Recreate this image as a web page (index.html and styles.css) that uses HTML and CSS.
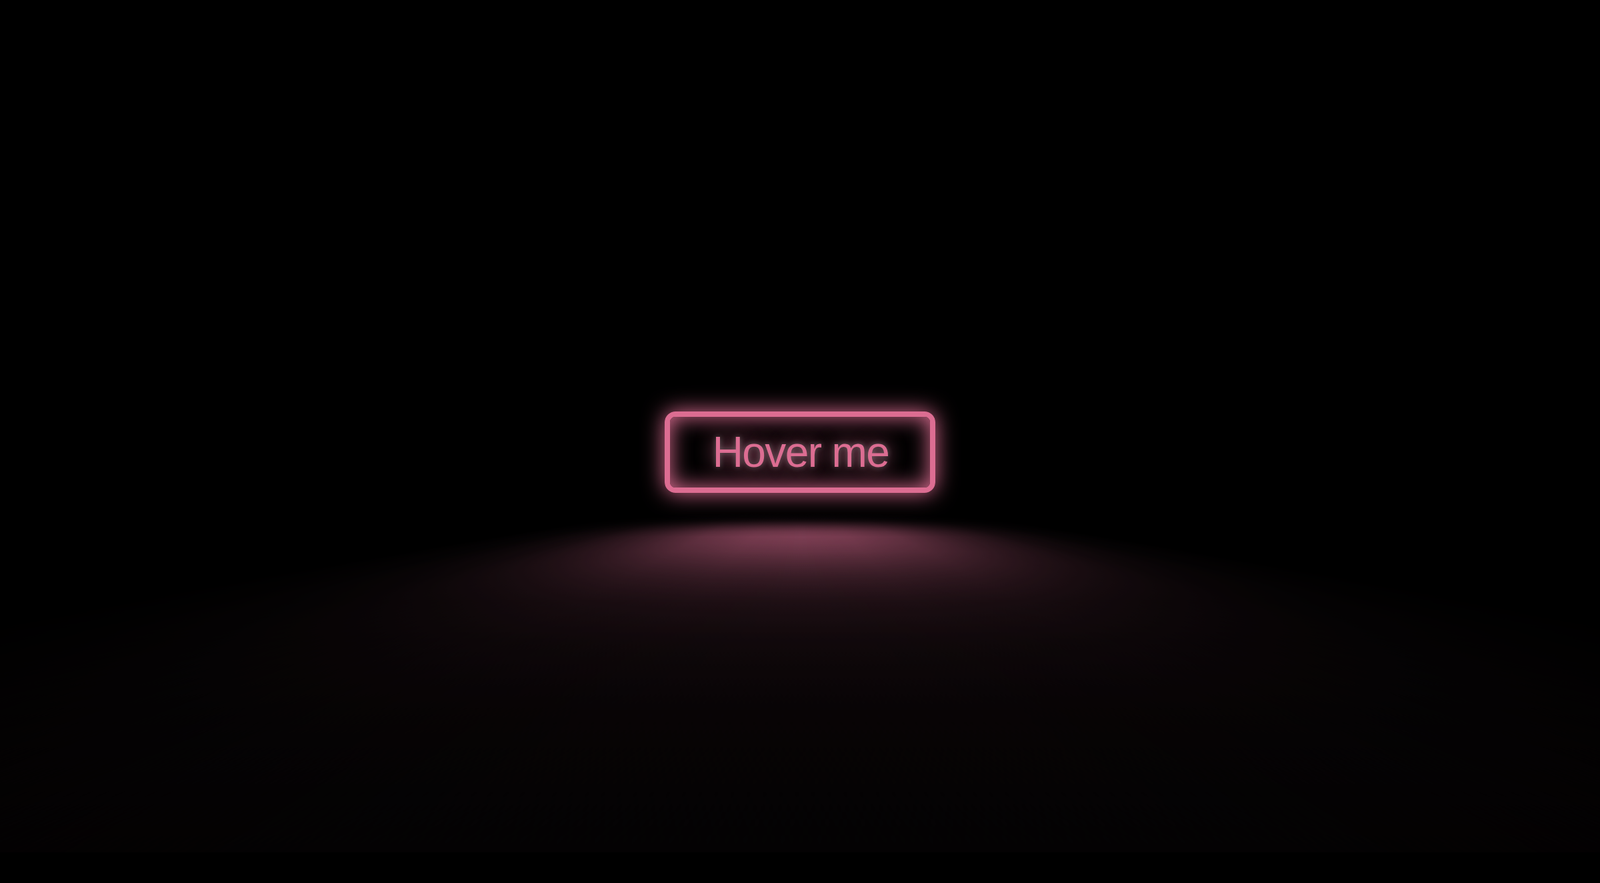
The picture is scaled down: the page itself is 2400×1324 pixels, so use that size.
FILE: index.html
```html
<!DOCTYPE html>
<html lang="en">
<head>
<meta charset="utf-8">
<title>Neon button</title>
<link rel="stylesheet" href="styles.css">
</head>
<body>
<main class="stage">
  <a href="#" class="neon-button">Hover me</a>
</main>
</body>
</html>
```
FILE: styles.css
```css
html, body {
  margin: 0;
  padding: 0;
  background: #000;
  overflow: hidden;
}
.stage {
  --clr-neon: #dc6d92;
  height: 100vh;
  overflow: hidden;
  box-sizing: border-box;
  padding-top: 31px;
  display: grid;
  place-items: center;
  font-family: "Liberation Sans", Arial, sans-serif;
}
.neon-button {
  font-size: 64px;
  letter-spacing: -1.6px;
  display: inline-block;
  cursor: pointer;
  text-decoration: none;
  color: var(--clr-neon);
  border: 8px solid var(--clr-neon);
  padding: 16px 62px 16px 64px;
  border-radius: 16px;
  position: relative;
  text-shadow: 0 0 0.125em rgba(255,255,255,0.3), 0 0 0.45em currentColor;
  box-shadow: inset 0 0 0.5em 0 var(--clr-neon), 0 0 0.5em 0 var(--clr-neon);
}
.neon-button::before {
  pointer-events: none;
  content: "";
  position: absolute;
  top: calc(120% - 192px);
  left: -260px;
  width: calc(100% + 520px);
  height: calc(100% + 384px);
  background: linear-gradient(to bottom,
    rgba(220,109,146,0) 0%,
    rgba(220,109,146,0.015) 10.9%,
    rgba(220,109,146,0.05) 17.4%,
    rgba(220,109,146,0.13) 23.9%,
    rgba(220,109,146,0.27) 30.4%,
    rgba(220,109,146,0.45) 37%,
    rgba(220,109,146,0.62) 43.5%,
    rgba(220,109,146,0.7) 50%,
    rgba(220,109,146,0.66) 56.5%,
    rgba(220,109,146,0.58) 63%,
    rgba(220,109,146,0.45) 69.6%,
    rgba(220,109,146,0.3) 76.1%,
    rgba(220,109,146,0.17) 82.6%,
    rgba(220,109,146,0.09) 89.1%,
    rgba(220,109,146,0.045) 95%,
    rgba(220,109,146,0.02) 100%);
  -webkit-mask-image: linear-gradient(to right,
    rgba(0,0,0,0) 0%,
    rgba(0,0,0,0.05) 8%,
    rgba(0,0,0,0.18) 16%,
    rgba(0,0,0,0.45) 25%,
    rgba(0,0,0,0.78) 34%,
    rgba(0,0,0,0.95) 42%,
    #000 50%,
    rgba(0,0,0,0.95) 58%,
    rgba(0,0,0,0.78) 66%,
    rgba(0,0,0,0.45) 75%,
    rgba(0,0,0,0.18) 84%,
    rgba(0,0,0,0.05) 92%,
    rgba(0,0,0,0) 100%);
  mask-image: linear-gradient(to right,
    rgba(0,0,0,0) 0%,
    rgba(0,0,0,0.05) 8%,
    rgba(0,0,0,0.18) 16%,
    rgba(0,0,0,0.45) 25%,
    rgba(0,0,0,0.78) 34%,
    rgba(0,0,0,0.95) 42%,
    #000 50%,
    rgba(0,0,0,0.95) 58%,
    rgba(0,0,0,0.78) 66%,
    rgba(0,0,0,0.45) 75%,
    rgba(0,0,0,0.18) 84%,
    rgba(0,0,0,0.05) 92%,
    rgba(0,0,0,0) 100%);
  transform: perspective(1em) rotateX(40deg) scale(1, 0.35);
  opacity: 0.8;
}
```
